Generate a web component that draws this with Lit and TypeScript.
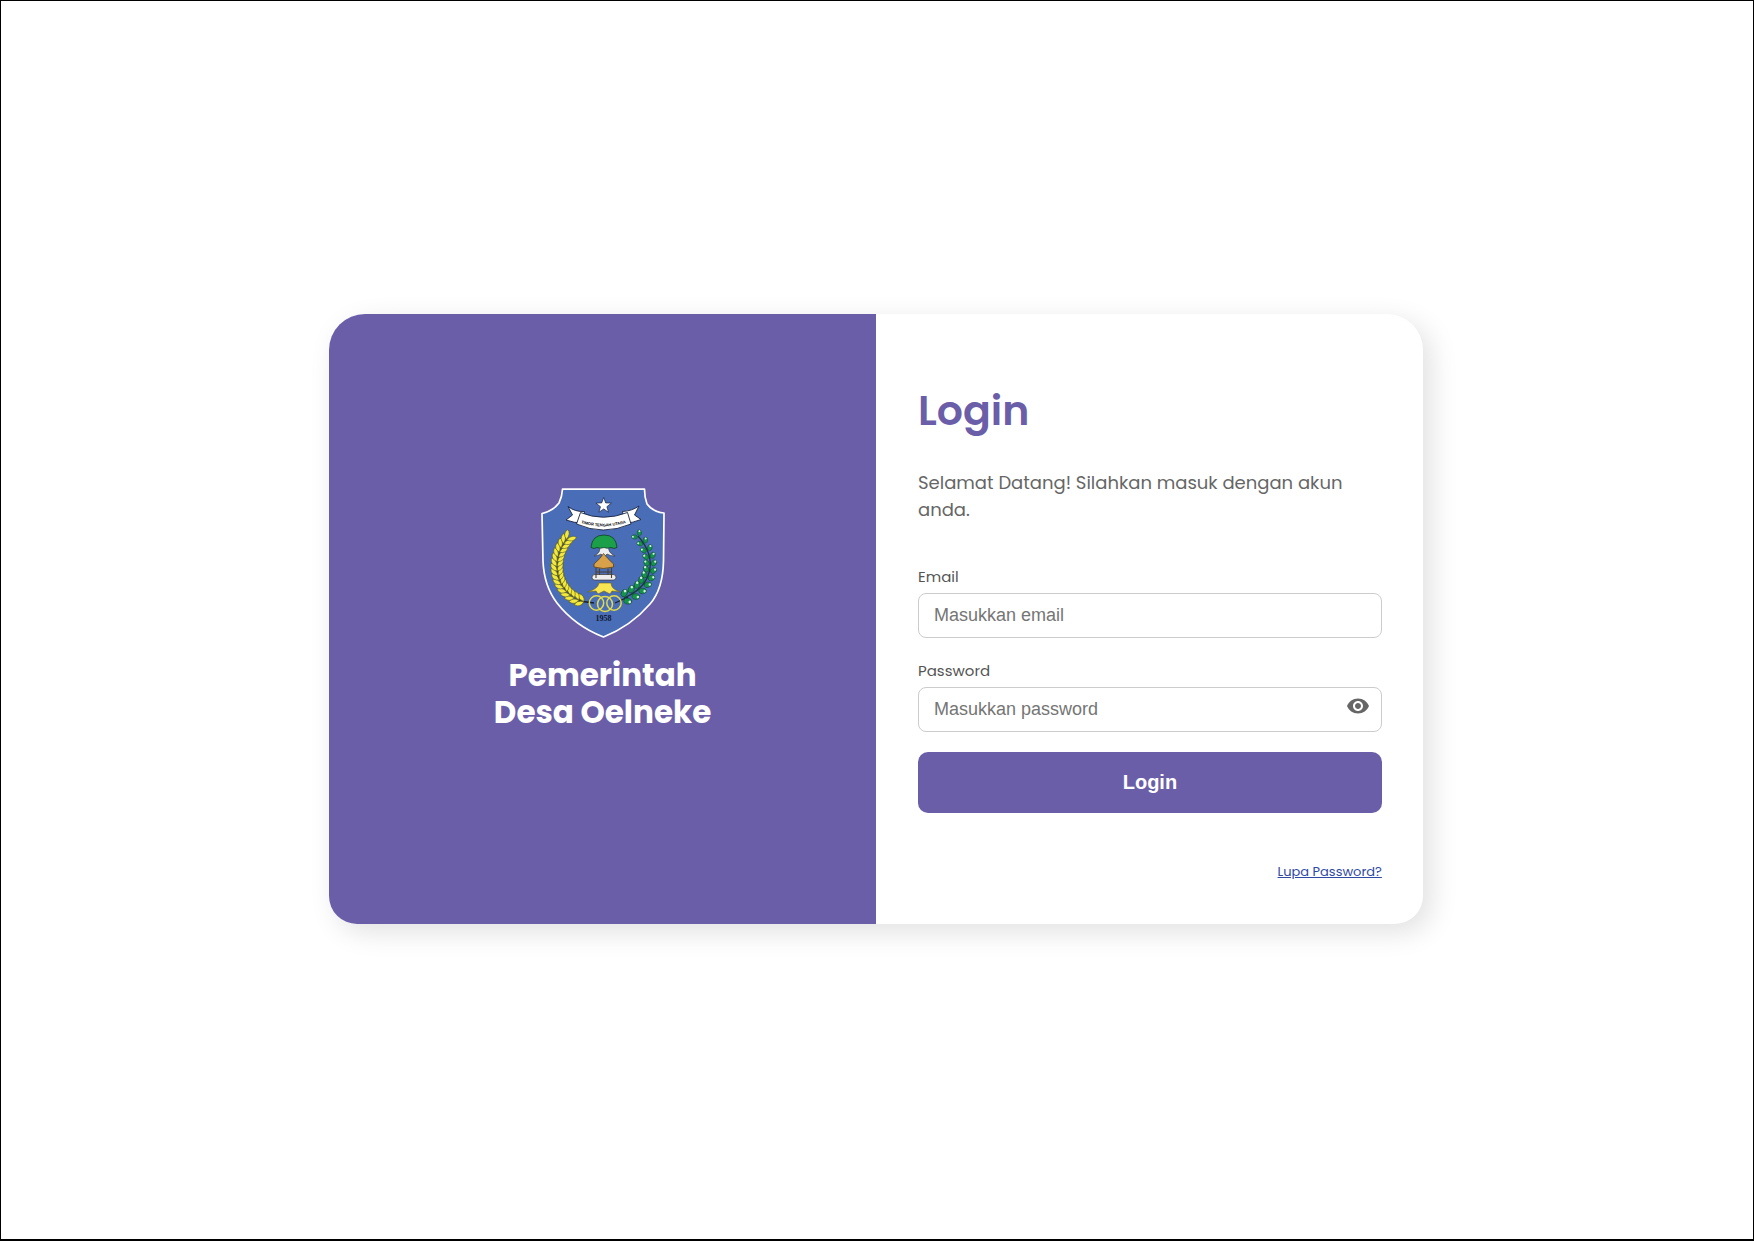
import { LitElement, html, svg, css } from "lit";
import { customElement, state } from "lit/decorators.js";

type Point = [number, number];

/** Point and heading (degrees) on a cubic curve at t. */
function along(c: Point[], t: number) {
  const u = 1 - t;
  const at = (i: 0 | 1) =>
    u * u * u * c[0][i] + 3 * u * u * t * c[1][i] + 3 * u * t * t * c[2][i] + t * t * t * c[3][i];
  const slope = (i: 0 | 1) =>
    u * u * (c[1][i] - c[0][i]) + 2 * u * t * (c[2][i] - c[1][i]) + t * t * (c[3][i] - c[2][i]);
  return { x: at(0), y: at(1), angle: (Math.atan2(slope(1), slope(0)) * 180) / Math.PI };
}

const wheat: Point[] = [[41, 113], [13, 104], [9, 70], [27, 50]];
const cotton: Point[] = [[83, 110], [111, 98], [118, 72], [97, 48]];

@customElement("village-crest")
export class VillageCrest extends LitElement {
  static styles = css`
    :host { display: block; }
    .crest { display: block; width: 124px; height: 150px; }
    .motto { font: bold 4px "Liberation Sans", sans-serif; }
    .year { font: bold 8px "Liberation Serif", serif; }
  `;

  private grain(t: number) {
    const p = along(wheat, t);
    return svg`<g transform="translate(${p.x} ${p.y}) rotate(${p.angle})">
      <path d="M-2 0Q-1-7 6-6Q6-1-2 0Z" fill="#f2e93c" stroke="#4a4a12" stroke-width=".5"/>
      <path d="M-2 0Q-1 7 6 6Q6 1-2 0Z" fill="#f2e93c" stroke="#4a4a12" stroke-width=".5"/>
    </g>`;
  }

  private leaf(t: number) {
    const p = along(cotton, t);
    const s = 1.1 - t * 0.3;
    return svg`<g transform="translate(${p.x} ${p.y}) rotate(${p.angle}) scale(${s})">
      <ellipse cx="2" cy="-4" rx="3.600" ry="2.700" transform="rotate(-35 2 -4)" fill="#15934a" stroke="#123d33" stroke-width=".5"/>
      <ellipse cx="2" cy="4" rx="3.600" ry="2.700" transform="rotate(35 2 4)" fill="#15934a" stroke="#123d33" stroke-width=".5"/>
      <circle cx="3.400" cy="-5.400" r="1.200" fill="#d5efdc"/>
      <circle cx="3.400" cy="5.400" r="1.200" fill="#d5efdc"/>
    </g>`;
  }

  render() {
    const grains = Array.from({ length: 17 }, (_, i) => i / 16);
    const leaves = Array.from({ length: 11 }, (_, i) => i / 10);
    return html`<svg class="crest" viewBox="0 0 124 150" role="img" aria-label="Timor Tengah Utara">
      <path d="M21.500 1.200H103.500Q103.500 9 106 16Q112 24 123 25L122.500 73Q122 101 109 116Q90 138 62.500 149Q34 138 16 115Q3 98 2 73L1 25.500Q12 23 18 15Q21 9 21.500 1.200Z" fill="#4a6db7" stroke="#fff" stroke-width="1.700" stroke-linejoin="round"/>
      <path d="M62.700 9.500l2 5.400 5.700.2-4.500 3.600 1.600 5.500-4.800-3.200-4.800 3.200 1.600-5.500-4.500-3.600 5.700-.2z" fill="#fff" stroke="#16243f" stroke-width=".7"/>
      <path d="M27 18.500Q34 24 43.500 23.500L42 35Q33 35 25 32L31.500 27ZM98 18Q91 23 81.500 23.500L83.500 35Q92 35 100 31.500L93.500 27Z" fill="#fff" stroke="#16243f" stroke-width=".9"/>
      <path d="M39.500 24.500Q62 34 86.500 24.500L90 36Q62 48 35.500 36Z" fill="#fff" stroke="#16243f" stroke-width=".9"/>
      <path id="motto-line" d="M35 33.200Q62 43.600 90 33.200" fill="none"/>
      <text class="motto" fill="#000" text-anchor="middle"><textPath href="#motto-line" startOffset="50%">TIMOR TENGAH UTARA</textPath></text>
      <path d="M58 58Q61 64 53 68Q59 67 60 66L63 69 66 66Q69 68 74 68Q66 64 68 58Z" fill="#eee" stroke="#333" stroke-width=".6"/>
      <path d="M50 59.500Q51 47 63 47T76 59.500Q73 61.500 70 59.500Q66 61 63 59.500Q59 61 56 59.500Q53 61.500 50 59.500Z" fill="#1b9f49" stroke="#123d2a" stroke-width=".8"/>
      <rect x="51" y="86.500" width="24" height="5.600" rx="2.800" fill="#eee" stroke="#444" stroke-width=".8"/>
      <path d="M55 79V90M70.500 79V90M58.500 80V87M67 80V87M55 84H70" fill="none" stroke="#4b4232" stroke-width="1.100"/>
      <path d="M62.500 65.500Q66 70 72.500 76V79Q62 82 53 79V76Q60 70 62.500 65.500Z" fill="#d9a14a" stroke="#594018" stroke-width=".8"/>
      <path d="M58 95H70Q70 101 79 104L71 103 69 106 63 103 57 106 55 103 46.500 104Q57 101 58 95Z" fill="#f8e552" stroke="#65601d" stroke-width=".6"/>
      <path d="M38 113L53 115M74 115L87 109" stroke="#17202c" stroke-width="1.300"/>
      <g fill="none" stroke="#e4dc45" stroke-width="1.500"><circle cx="55.500" cy="115" r="7.200"/><circle cx="73" cy="115" r="7.200"/><circle cx="64" cy="116" r="7.500"/></g>
      <path d="M41 113C13 104 9 70 27 50" fill="none" stroke="#4a4a12"/>
      ${grains.map((t) => this.grain(t))}
      ${leaves.map((t) => this.leaf(t))}
      <path d="M83 110C111 98 118 72 97 48" fill="none" stroke="#123d33" stroke-width="1.300"/>
      <text class="year" x="62.500" y="132.500" text-anchor="middle" fill="#111a30">1958</text>
    </svg>`;
  }
}

@customElement("app-root")
export class AppRoot extends LitElement {
  @state() private revealed = false;

  static styles = css`
    :host {
      --brand: #6b5ea8;
      display: flex;
      align-items: center;
      justify-content: center;
      box-sizing: border-box;
      min-height: 100vh;
      padding: 0 2px 2px 0;
      border: 1px solid #000;
      border-bottom-width: 2px;
      background: #fff;
      color: #666;
      font-family: Poppins, Inter, sans-serif;
    }
    .card {
      display: grid;
      grid-template-columns: 1fr 1fr;
      width: 62.5%;
      min-height: 610px;
      border-radius: 36px 36px 28px 28px;
      overflow: hidden;
      background: #fff;
      box-shadow: 8px 8px 28px rgba(0, 0, 0, 0.12);
    }
    .brand {
      display: flex;
      flex-direction: column;
      align-items: center;
      padding-top: 174px;
      background: var(--brand);
      color: #fff;
    }
    .name {
      margin: 19px 0 0;
      font-size: 31px;
      line-height: 37px;
      font-weight: 700;
      text-align: center;
    }
    .panel {
      display: flex;
      flex-direction: column;
      padding: 65px 41px 40px 42px;
    }
    .title {
      margin: 0;
      color: var(--brand);
      font-size: 41px;
      line-height: 64px;
      font-weight: 600;
    }
    .welcome {
      margin: 26px 0 41px;
      font-size: 18px;
      line-height: 27px;
    }
    .form { display: flex; flex-direction: column; }
    .field { display: flex; flex-direction: column; margin-bottom: 20px; }
    .label { margin-bottom: 3px; color: #555; font-size: 15px; line-height: 26px; }
    .control { position: relative; display: flex; }
    .input {
      box-sizing: border-box;
      width: 100%;
      height: 45px;
      padding: 0 15px;
      border: 1px solid #ccc;
      border-radius: 8px;
      background: #fff;
      color: #333;
      font: 18px "Liberation Sans", Arial, sans-serif;
    }
    .input::placeholder { color: #757575; }
    .reveal {
      position: absolute;
      top: 7px;
      right: 12px;
      display: flex;
      padding: 0;
      border: 0;
      background: none;
      color: #666;
      cursor: pointer;
    }
    .eye { width: 24px; height: 24px; fill: currentColor; }
    .submit {
      height: 61px;
      border: 0;
      border-radius: 10px;
      background: var(--brand);
      color: #fff;
      font: bold 20px "Liberation Sans", Arial, sans-serif;
      cursor: pointer;
    }
    .forgot {
      align-self: flex-end;
      margin-top: 48px;
      color: #2f49a5;
      font-size: 13px;
      line-height: 21px;
    }
  `;

  render() {
    return html`<main class="card">
      <section class="brand">
        <village-crest></village-crest>
        <h2 class="name">Pemerintah<br />Desa Oelneke</h2>
      </section>
      <section class="panel">
        <h1 class="title">Login</h1>
        <p class="welcome">Selamat Datang! Silahkan masuk dengan akun anda.</p>
        <form class="form" @submit=${(e: Event) => e.preventDefault()}>
          <div class="field">
            <label class="label" for="email">Email</label>
            <div class="control">
              <input class="input" id="email" type="email" placeholder="Masukkan email" />
            </div>
          </div>
          <div class="field">
            <label class="label" for="password">Password</label>
            <div class="control">
              <input class="input" id="password" type=${this.revealed ? "text" : "password"} placeholder="Masukkan password" />
              <button class="reveal" type="button" aria-label="Tampilkan password" aria-pressed=${this.revealed} @click=${() => (this.revealed = !this.revealed)}>
                <svg class="eye" viewBox="0 0 24 24" aria-hidden="true"><path d="M12 4.500C7 4.500 2.730 7.610 1 12c1.730 4.390 6 7.500 11 7.500s9.270-3.110 11-7.500c-1.730-4.390-6-7.500-11-7.500zM12 17c-2.760 0-5-2.240-5-5s2.240-5 5-5 5 2.240 5 5-2.240 5-5 5zm0-8c-1.660 0-3 1.340-3 3s1.340 3 3 3 3-1.340 3-3-1.340-3-3-3z"/></svg>
              </button>
            </div>
          </div>
          <button class="submit" type="submit">Login</button>
        </form>
        <a class="forgot" href="#lupa-password">Lupa Password?</a>
      </section>
    </main>`;
  }
}
